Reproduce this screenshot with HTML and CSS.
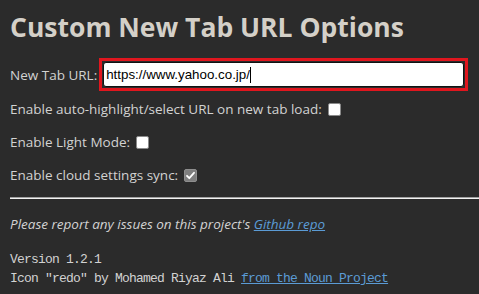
FILE: index.html
```html
<!DOCTYPE html>
<html>
<head>
<meta charset="utf-8">
<link rel="stylesheet" href="styles.css">
</head>
<body>
<h1 class="title">Custom New Tab URL Options</h1>
<div class="row url-row">
  <span class="label">New Tab URL:</span>
  <div class="focus-ring">
    <div class="url-input"><span class="url-text">https://www.yahoo.co.jp/</span><span class="caret"></span></div>
  </div>
</div>
<div class="row opt">
  <span class="label">Enable auto-highlight/select URL on new tab load:</span>
  <span class="box"></span>
</div>
<div class="row opt">
  <span class="label">Enable Light Mode:</span>
  <span class="box"></span>
</div>
<div class="row opt">
  <span class="label">Enable cloud settings sync:</span>
  <span class="box checked"><svg viewBox="0 0 13 13" width="13" height="13"><path d="M3 6.8 L5.3 9.2 L10 3.8" fill="none" stroke="#fff" stroke-width="1.8" stroke-linecap="round" stroke-linejoin="round"/></svg></span>
</div>
<hr class="rule">
<p class="report">Please report any issues on this project's <a class="link" href="#">Github repo</a></p>
<div class="mono">
  <div>Version 1.2.1</div>
  <div>Icon "redo" by Mohamed Riyaz Ali <a class="link" href="#">from the Noun Project</a></div>
</div>
</body>
</html>
```
FILE: styles.css
```css
html, body {
  margin: 0;
  overflow: hidden;
}
body {
  padding: 0 0 0 10px;
  background: #2b2b2b;
  color: #d2d2d2;
  font-family: "Open Sans", "Noto Sans", sans-serif;
  font-size: 13.5px;
  height: 294px;
}
.title {
  margin: 11px 0 0 0;
  font-size: 26.5px;
  line-height: 32px;
  font-weight: 700;
  color: #d4d0c8;
}
.row {
  display: flex;
  align-items: center;
  line-height: 20px;
}
.url-row {
  margin-top: 15px;
  gap: 2px;
}
.focus-ring {
  border: 3px solid #e0161e;
  padding: 1px;
  display: flex;
}
.url-input {
  box-sizing: border-box;
  width: 361px;
  height: 25px;
  border: 1px solid #111;
  border-radius: 3px;
  background: #fff;
  display: flex;
  align-items: center;
  padding-left: 2px;
  color: #000;
  font-family: "Liberation Sans", Arial, sans-serif;
  font-size: 13.33px;
}
.caret {
  width: 1px;
  height: 16px;
  background: #000;
}
.opt {
  margin-top: 8px;
  gap: 6px;
}
.opt + .opt {
  margin-top: 13px;
}
.box {
  box-sizing: border-box;
  width: 13px;
  height: 13px;
  border: 1px solid #8a8a8a;
  border-radius: 2px;
  background: #fff;
  display: flex;
}
.box.checked {
  background: #7e7e7e;
  border-color: #8e8e8e;
}
.box svg {
  margin: -1px;
}
.rule {
  margin: 12px 0 0 0;
  height: 0;
  border: 0;
  border-top: 1px solid #a0a0a0;
  border-bottom: 1px solid #f2f2f2;
}
.report {
  margin: 15px 0 0 0;
  font-style: italic;
  line-height: 20px;
}
.link {
  color: #5b9bd5;
  text-decoration: underline;
}
.mono {
  margin-top: 16px;
  font-family: "Liberation Mono", "DejaVu Sans Mono", monospace;
  font-size: 13px;
  letter-spacing: -0.8px;
  line-height: 19px;
}
```
